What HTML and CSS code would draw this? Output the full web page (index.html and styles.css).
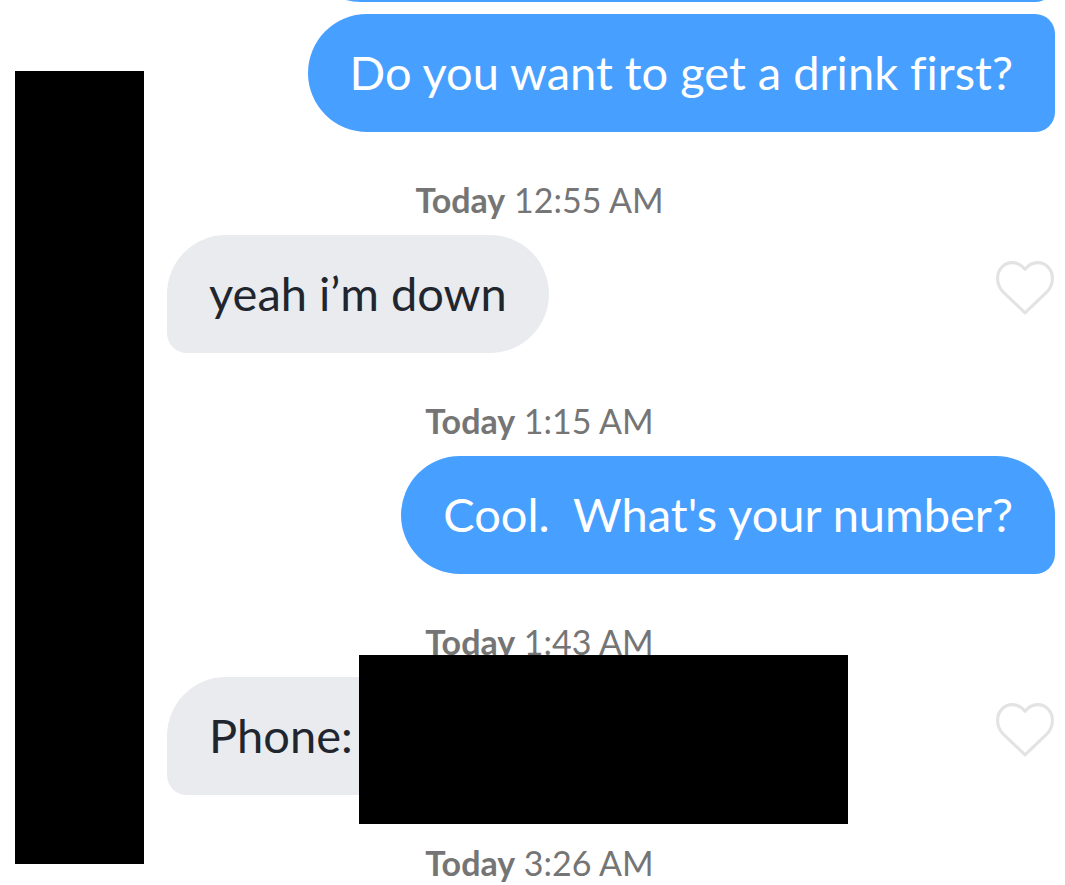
FILE: index.html
```
<!DOCTYPE html>
<html lang="en">
<head>
    <meta charset="UTF-8">
    <meta name="viewport" content="width=device-width, initial-scale=1.0">
    <title>Messages</title>
    <link rel="stylesheet" href="styles.css">
</head>
<body>
    <main class="chat">
        <!-- Earlier message, scrolled out of view -->
        <div class="row sent">
            <div class="bubble earlier"></div>
        </div>
        <div class="row sent">
            <p class="bubble grouped">Do you want to get a drink first?</p>
        </div>

        <p class="timestamp"><strong>Today</strong> 12:55 AM</p>
        <div class="row received">
            <p class="bubble">yeah i’m down</p>
            <button type="button" class="like" aria-label="Like message">
                <svg viewBox="0 0 58 54"><path d="M29 52 L8 32 C2.500 26.500 2.500 20 2.500 18.500 C2.500 10 9 3.500 16.500 3.500 C21.500 3.500 26 6 29 10 C32 6 36.500 3.500 41.500 3.500 C49 3.500 55.500 10 55.500 18.500 C55.500 20 55.500 26.500 50 32 Z"/></svg>
            </button>
        </div>

        <p class="timestamp"><strong>Today</strong> 1:15 AM</p>
        <div class="row sent">
            <p class="bubble">Cool.&nbsp; What's your number?</p>
        </div>

        <p class="timestamp"><strong>Today</strong> 1:43 AM</p>
        <div class="row received">
            <p class="bubble contact">Phone: <span class="redacted"></span></p>
            <button type="button" class="like" aria-label="Like message">
                <svg viewBox="0 0 58 54"><path d="M29 52 L8 32 C2.500 26.500 2.500 20 2.500 18.500 C2.500 10 9 3.500 16.500 3.500 C21.500 3.500 26 6 29 10 C32 6 36.500 3.500 41.500 3.500 C49 3.500 55.500 10 55.500 18.500 C55.500 20 55.500 26.500 50 32 Z"/></svg>
            </button>
        </div>

        <p class="timestamp"><strong>Today</strong> 3:26 AM</p>
        <div class="avatar-cover"></div>
    </main>
</body>
</html>
```
FILE: styles.css
```
* {
    box-sizing: border-box;
}
body {
    margin: 0;
    background-color: #fff;
    font-family: Lato, "Open Sans", sans-serif;
}
.chat {
    position: relative;
    display: flex;
    flex-direction: column;
    justify-content: flex-end;
    height: 100vh;
    padding: 0 10px 2px 24px;
    overflow: hidden;
}
.row {
    display: flex;
    flex-shrink: 0;
    align-items: center;
}
.sent {
    justify-content: flex-end;
}
.received {
    justify-content: space-between;
    padding-left: 143px;
}
.bubble {
    position: relative;
    min-height: 118px;
    margin: 0;
    padding: 28px 42px 30px;
    border-radius: 59px;
    font-size: 47px;
    font-variant-ligatures: none;
    line-height: 60px;
}
.sent .bubble {
    background-color: #47a0ff;
    border-bottom-right-radius: 20px;
    color: #fff;
}
.sent .grouped {
    border-top-right-radius: 20px;
}
.sent .earlier {
    width: 73%;
    margin-bottom: 12px;
}
.received .bubble {
    background-color: #e9ebee;
    border-bottom-left-radius: 20px;
    color: #21262e;
}
.received .contact {
    width: 70%;
}
.timestamp {
    flex-shrink: 0;
    margin: 48px 0 15px;
    color: #757575;
    font-size: 34px;
    line-height: 40px;
    text-align: center;
}
.timestamp:nth-last-child(2) {
    margin-bottom: 0;
}
.like {
    margin-bottom: 14px;
    padding: 0;
    border: none;
    background: none;
    cursor: pointer;
}
.like svg {
    display: block;
    width: 60px;
    fill: none;
    stroke: #e3e3e3;
    stroke-width: 3;
    stroke-linejoin: round;
}
/* Solid blocks that hide private details */
.redacted {
    position: absolute;
    top: -22px;
    left: 192px;
    width: 489px;
    height: 169px;
    background-color: #000;
}
.avatar-cover {
    position: absolute;
    top: 71px;
    bottom: 21px;
    left: 15px;
    width: 129px;
    background-color: #000;
}
```
